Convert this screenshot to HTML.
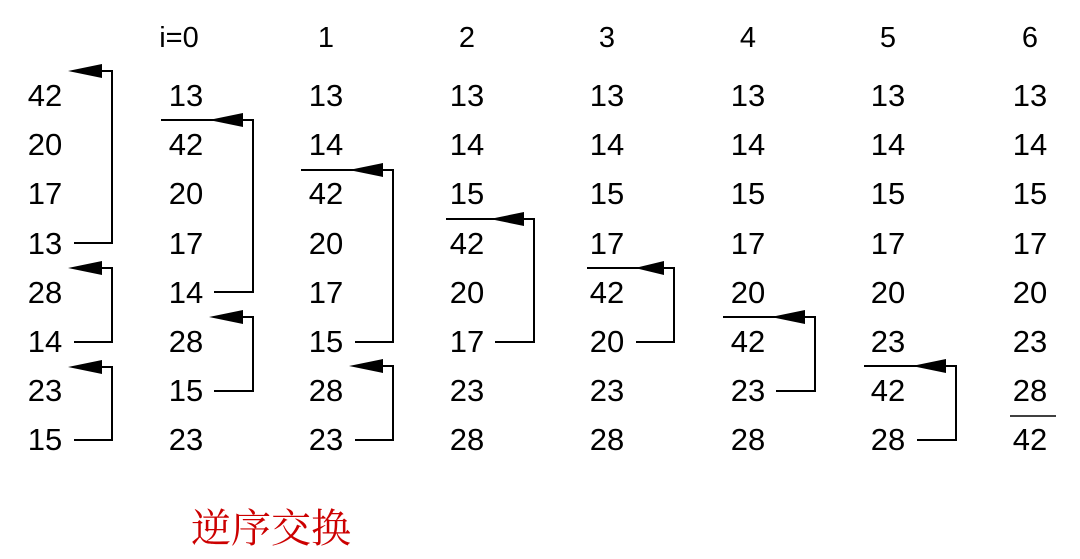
<!DOCTYPE html>
<html><head><meta charset="utf-8"><style>
html,body{margin:0;padding:0;background:#fff;}
svg{display:block}
text{font-family:"Liberation Sans",sans-serif;font-size:31px;fill:#000;text-anchor:middle}
.h{font-size:29px}
.cn{font-family:"Liberation Serif","Noto Serif CJK SC",serif;font-size:40px;fill:#cc0000;text-anchor:start}
line,polyline{stroke:#000;stroke-width:2;fill:none}
</style></head><body>
<svg width="1080" height="559" viewBox="0 0 1080 559">
<g>
<text class="h" x="179" y="47">i=0</text>
<text class="h" x="326" y="47">1</text>
<text class="h" x="467" y="47">2</text>
<text class="h" x="607" y="47">3</text>
<text class="h" x="748" y="47">4</text>
<text class="h" x="888" y="47">5</text>
<text class="h" x="1030" y="47">6</text>
</g>
<g>
<text x="45" y="106">42</text><text x="45" y="155">20</text><text x="45" y="204">17</text><text x="45" y="254">13</text>
<text x="45" y="303">28</text><text x="45" y="352">14</text><text x="45" y="401">23</text><text x="45" y="450">15</text>
</g>
<g>
<text x="186" y="106">13</text><text x="186" y="155">42</text><text x="186" y="204">20</text><text x="186" y="254">17</text>
<text x="186" y="303">14</text><text x="186" y="352">28</text><text x="186" y="401">15</text><text x="186" y="450">23</text>
</g>
<g>
<text x="326" y="106">13</text><text x="326" y="155">14</text><text x="326" y="204">42</text><text x="326" y="254">20</text>
<text x="326" y="303">17</text><text x="326" y="352">15</text><text x="326" y="401">28</text><text x="326" y="450">23</text>
</g>
<g>
<text x="467" y="106">13</text><text x="467" y="155">14</text><text x="467" y="204">15</text><text x="467" y="254">42</text>
<text x="467" y="303">20</text><text x="467" y="352">17</text><text x="467" y="401">23</text><text x="467" y="450">28</text>
</g>
<g>
<text x="607" y="106">13</text><text x="607" y="155">14</text><text x="607" y="204">15</text><text x="607" y="254">17</text>
<text x="607" y="303">42</text><text x="607" y="352">20</text><text x="607" y="401">23</text><text x="607" y="450">28</text>
</g>
<g>
<text x="748" y="106">13</text><text x="748" y="155">14</text><text x="748" y="204">15</text><text x="748" y="254">17</text>
<text x="748" y="303">20</text><text x="748" y="352">42</text><text x="748" y="401">23</text><text x="748" y="450">28</text>
</g>
<g>
<text x="888" y="106">13</text><text x="888" y="155">14</text><text x="888" y="204">15</text><text x="888" y="254">17</text>
<text x="888" y="303">20</text><text x="888" y="352">23</text><text x="888" y="401">42</text><text x="888" y="450">28</text>
</g>
<g>
<text x="1030" y="106">13</text><text x="1030" y="155">14</text><text x="1030" y="204">15</text><text x="1030" y="254">17</text>
<text x="1030" y="303">20</text><text x="1030" y="352">23</text><text x="1030" y="401">28</text><text x="1030" y="450">42</text>
</g>
<g>
<polyline points="74,243 112,243 112,71 100,71"/><polygon points="68,71 102,64 102,78"/>
<polyline points="74,342 112,342 112,268 100,268"/><polygon points="68,268 102,261 102,275"/>
<polyline points="74,440 112,440 112,367 100,367"/><polygon points="68,367 102,360 102,374"/>

<polyline points="214,292 253,292 253,120 161,120"/><polygon points="209,120 243,113 243,127"/>
<polyline points="214,391 253,391 253,317 240,317"/><polygon points="209,317 243,310 243,324"/>

<polyline points="355,342 393,342 393,170 301,170"/><polygon points="349,170 383,163 383,177"/>
<polyline points="355,440 393,440 393,366 380,366"/><polygon points="349,366 383,359 383,373"/>

<polyline points="495,342 534,342 534,219 446,219"/><polygon points="490,219 524,212 524,226"/>
<polyline points="636,342 674,342 674,268 587,268"/><polygon points="635,268 664,261 664,275"/>
<polyline points="776,391 815,391 815,317 723,317"/><polygon points="771,317 805,310 805,324"/>
<polyline points="917,440 956,440 956,366 864,366"/><polygon points="912,366 946,359 946,373"/>
<line x1="1010" y1="416" x2="1056" y2="416" style="stroke-width:1.5"/>
</g>
<text class="cn" x="191" y="542">逆序交换</text>
</svg>
</body></html>
